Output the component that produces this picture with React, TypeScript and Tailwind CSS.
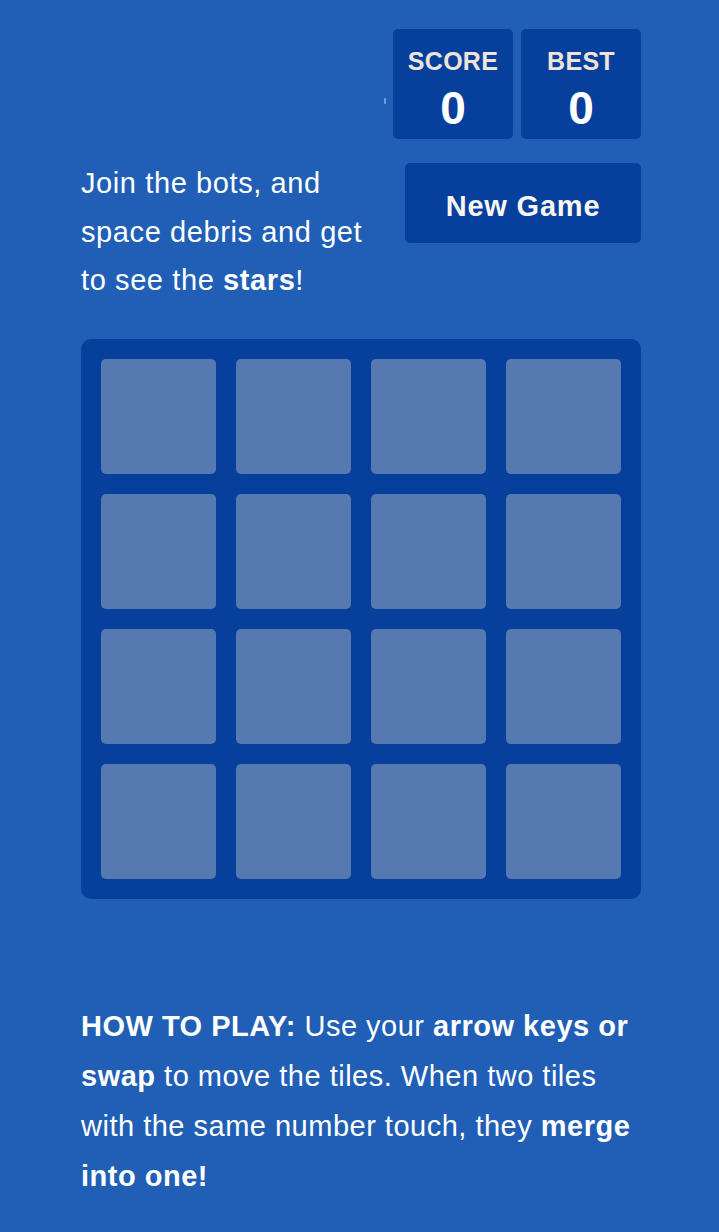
import React from "react";

function ScoreBox({ label, value }: { label: string; value: number }) {
  return (
    <div className="w-[120px] h-[110px] rounded-[5px] bg-[#06409c] flex flex-col items-center pt-[19px]">
      <span className="text-[25px] leading-[26px] font-bold tracking-[0.3px] text-[#eee4da]">{label}</span>
      <span className="text-[46px] leading-[46px] font-bold text-white mt-[11px]">{value}</span>
    </div>
  );
}

export default function App() {
  const cells = Array.from({ length: 16 }, (_, i) => i);

  return (
    <div
      className="min-h-[1232px] bg-[#205fb5] text-white"
      style={{ fontFamily: '"Liberation Sans", Arial, sans-serif' }}
    >
      <div className="w-[560px] ml-[81px] pt-[29px]">
        <header className="flex justify-end items-start gap-2">
          <div className="w-[2px] h-[6px] mt-[69px] mr-[-1px] rounded-full bg-white/40" />
          <ScoreBox label="SCORE" value={0} />
          <ScoreBox label="BEST" value={0} />
        </header>

        <div className="flex justify-between items-start mt-[20px]">
          <p className="w-[310px] text-[29px] leading-[48.5px] tracking-[0.6px]">
            Join the bots, and space debris and get to see the <strong>stars</strong>!
          </p>
          <button className="mt-[4px] pt-[7px] w-[236px] h-[80px] rounded-[5px] bg-[#06409c] text-[#f9f6f2] text-[29px] font-bold tracking-[0.8px]">
            New Game
          </button>
        </div>

        <div className="mt-[34px] bg-[#06409c] rounded-[10px] p-[20px] grid grid-cols-4 gap-[20px]">
          {cells.map((i) => (
            <div key={i} className="h-[115px] rounded-[5px] bg-[#eee4da]/35" />
          ))}
        </div>

        <p className="mt-[102px] text-[29px] leading-[50px] tracking-[0.5px]">
          <strong>HOW TO PLAY:</strong> Use your <strong>arrow keys or swap</strong> to move the
          tiles. When two tiles with the same number touch, they <strong>merge into one!</strong>
        </p>
      </div>
    </div>
  );
}
